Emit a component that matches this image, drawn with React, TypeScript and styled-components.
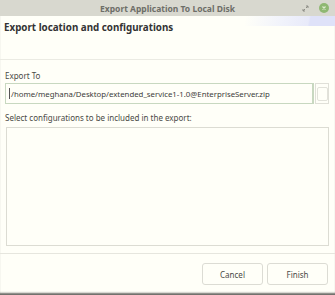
import React from "react";
import styled, { createGlobalStyle } from "styled-components";

const GlobalStyle = createGlobalStyle`
  html, body {
    margin: 0;
    padding: 0;
    background: #fffff8;
  }
  body {
    font-family: "Noto Sans", "Open Sans", sans-serif;
    color: #3c3c3c;
  }
`;

const StyledWindow = styled.div`
  width: 335px;
  height: 295px;
  display: flex;
  flex-direction: column;
  background: #fffff8;
  box-shadow: inset 0 -3px 2px -1px #6b6b66;
  overflow: hidden;
`;

const StyledTitleBar = styled.div`
  height: 16px;
  flex: none;
  background: #d8d8cf;
  display: flex;
  align-items: center;
  justify-content: center;
  position: relative;
  font-size: 8.5px;
  font-weight: bold;
  color: #6e6e68;
`;

const StyledTitleButtons = styled.div`
  position: absolute;
  right: 6px;
  top: 3px;
  display: flex;
  align-items: center;
  gap: 10px;
`;

const StyledClose = styled.div`
  width: 10px;
  height: 10px;
  border-radius: 50%;
  background: #8fb872;
  display: flex;
  align-items: center;
  justify-content: center;
`;

const StyledHeader = styled.div`
  height: 44px;
  flex: none;
  border-bottom: 1px solid #ebebe3;
  position: relative;
  padding: 5px 4px 0;
  box-sizing: border-box;
  font-size: 9.8px;
  font-weight: bold;
  color: #333;
`;

const StyledBanner = styled.div`
  position: absolute;
  right: 0;
  top: 0;
  width: 90px;
  height: 10px;
  background: linear-gradient(100deg, rgba(255, 255, 255, 0) 0%, #f1f3fb 40%, #e8eafa 70%, #dfe2f9 72%);
`;

const StyledBody = styled.div`
  flex: 1;
  display: flex;
  flex-direction: column;
  padding: 8px 6px 7px 5px;
`;

const StyledLabel = styled.div`
  font-size: 8px;
  color: #4a4a46;
  height: 14px;
  display: flex;
  align-items: center;
`;

const StyledRow = styled.div`
  display: flex;
  gap: 1px;
  margin: 1px 0 6px;
`;

const StyledInput = styled.div`
  flex: 1;
  height: 21px;
  box-sizing: border-box;
  border: 1px solid #c8d8c0;
  border-right-width: 2px;
  display: flex;
  align-items: center;
  padding-left: 3px;
  font-size: 7.8px;
  color: #3d3d3a;
  white-space: nowrap;
  overflow: hidden;
`;

const StyledCaret = styled.span`
  display: inline-block;
  width: 1px;
  height: 11px;
  background: #555;
  margin-right: 1px;
`;

const StyledBrowse = styled.div`
  width: 14px;
  height: 21px;
  box-sizing: border-box;
  border: 1px solid #e0e0d8;
  display: flex;
  align-items: center;
  justify-content: center;
  &::after {
    content: "";
    width: 9px;
    height: 12px;
    border: 1px solid #e2e2da;
    border-radius: 2px;
  }
`;

const StyledList = styled.div`
  flex: 1;
  margin: 3px 0 0 1px;
  border: 1px solid #dcdcd3;
`;

const StyledFooter = styled.div`
  height: 42px;
  flex: none;
  border-top: 1px solid #e6e6de;
  display: flex;
  justify-content: flex-end;
  align-items: flex-start;
  gap: 4px;
  padding: 9px 7px 0 0;
  box-sizing: border-box;
`;

const StyledButton = styled.button`
  width: 61px;
  height: 22px;
  border: 1px solid #dcdcd4;
  border-radius: 3px;
  background: #fffff8;
  font-family: "Noto Sans", "Open Sans", sans-serif;
  font-size: 8px;
  color: #4a4a46;
  padding: 0;
`;

export default function App() {
  return (
    <StyledWindow>
      <GlobalStyle />
      <StyledTitleBar>
        Export Application To Local Disk
        <StyledTitleButtons>
          <svg width="7" height="7" viewBox="0 0 7 7">
            <path d="M1 6 L3 4 M4 3 L6 1 M4 1 H6 V3 M1 4 V6 H3" stroke="#8d8d86" strokeWidth="1" fill="none" />
          </svg>
          <StyledClose>
            <svg width="6" height="6" viewBox="0 0 6 6">
              <path d="M1.5 1.5 L4.5 4.5 M4.5 1.5 L1.5 4.5" stroke="#dfeccf" strokeWidth="1.2" />
            </svg>
          </StyledClose>
        </StyledTitleButtons>
      </StyledTitleBar>
      <StyledHeader>
        <StyledBanner />
        Export location and configurations
      </StyledHeader>
      <StyledBody>
        <StyledLabel>Export To</StyledLabel>
        <StyledRow>
          <StyledInput>
            <StyledCaret />
            /home/meghana/Desktop/extended_service1-1.0@EnterpriseServer.zip
          </StyledInput>
          <StyledBrowse />
        </StyledRow>
        <StyledLabel>Select configurations to be included in the export:</StyledLabel>
        <StyledList />
      </StyledBody>
      <StyledFooter>
        <StyledButton>Cancel</StyledButton>
        <StyledButton>Finish</StyledButton>
      </StyledFooter>
    </StyledWindow>
  );
}
